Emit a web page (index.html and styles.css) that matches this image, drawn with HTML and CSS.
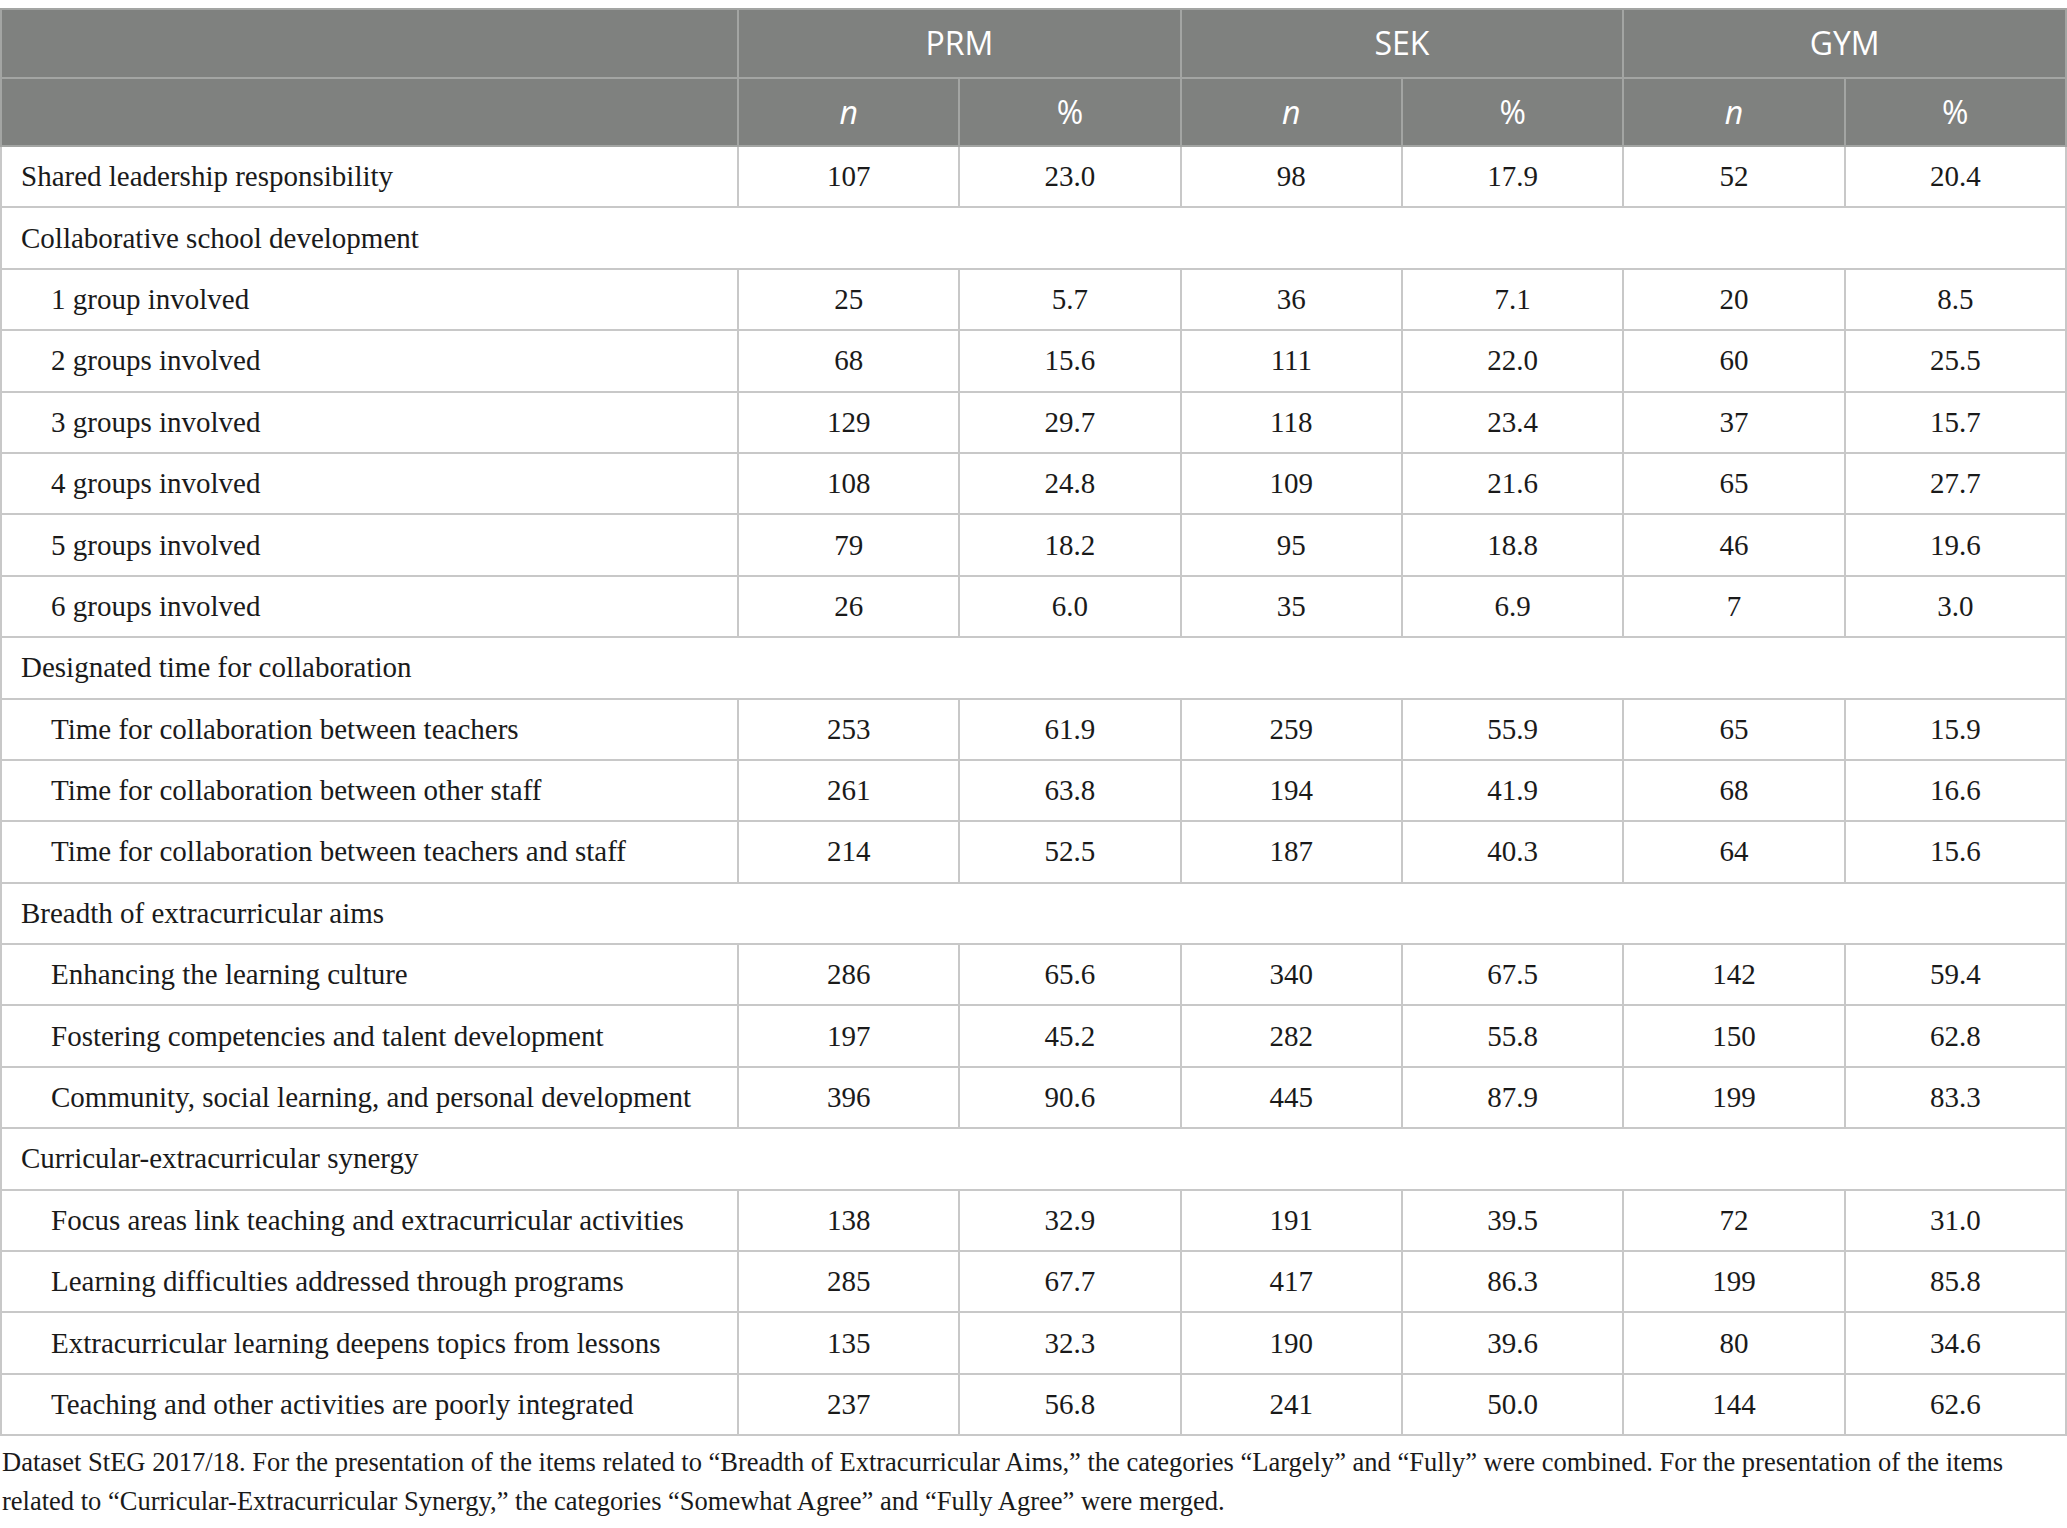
FILE: index.html
```html
<!DOCTYPE html>
<html lang="en">
<head>
<meta charset="utf-8"/>
<meta content="width=device-width, initial-scale=1.0" name="viewport"/>
<title>Table</title>
<link rel="stylesheet" href="styles.css">
</head>
<body>
<div class="wrap">
<table class="data">
<colgroup>
<col class="c-label">
<col><col><col><col><col><col>
</colgroup>
<thead>
<tr>
<th></th>
<th colspan="2">PRM</th>
<th colspan="2">SEK</th>
<th colspan="2">GYM</th>
</tr>
<tr>
<th></th>
<th><i>n</i></th><th>%</th>
<th><i>n</i></th><th>%</th>
<th><i>n</i></th><th>%</th>
</tr>
</thead>
<tbody>
<tr><td>Shared leadership responsibility</td><td>107</td><td>23.0</td><td>98</td><td>17.9</td><td>52</td><td>20.4</td></tr>
<tr class="section"><td colspan="7">Collaborative school development</td></tr>
<tr class="sub"><td>1 group involved</td><td>25</td><td>5.7</td><td>36</td><td>7.1</td><td>20</td><td>8.5</td></tr>
<tr class="sub"><td>2 groups involved</td><td>68</td><td>15.6</td><td>111</td><td>22.0</td><td>60</td><td>25.5</td></tr>
<tr class="sub"><td>3 groups involved</td><td>129</td><td>29.7</td><td>118</td><td>23.4</td><td>37</td><td>15.7</td></tr>
<tr class="sub"><td>4 groups involved</td><td>108</td><td>24.8</td><td>109</td><td>21.6</td><td>65</td><td>27.7</td></tr>
<tr class="sub"><td>5 groups involved</td><td>79</td><td>18.2</td><td>95</td><td>18.8</td><td>46</td><td>19.6</td></tr>
<tr class="sub"><td>6 groups involved</td><td>26</td><td>6.0</td><td>35</td><td>6.9</td><td>7</td><td>3.0</td></tr>
<tr class="section"><td colspan="7">Designated time for collaboration</td></tr>
<tr class="sub"><td>Time for collaboration between teachers</td><td>253</td><td>61.9</td><td>259</td><td>55.9</td><td>65</td><td>15.9</td></tr>
<tr class="sub"><td>Time for collaboration between other staff</td><td>261</td><td>63.8</td><td>194</td><td>41.9</td><td>68</td><td>16.6</td></tr>
<tr class="sub"><td>Time for collaboration between teachers and staff</td><td>214</td><td>52.5</td><td>187</td><td>40.3</td><td>64</td><td>15.6</td></tr>
<tr class="section"><td colspan="7">Breadth of extracurricular aims</td></tr>
<tr class="sub"><td>Enhancing the learning culture</td><td>286</td><td>65.6</td><td>340</td><td>67.5</td><td>142</td><td>59.4</td></tr>
<tr class="sub"><td>Fostering competencies and talent development</td><td>197</td><td>45.2</td><td>282</td><td>55.8</td><td>150</td><td>62.8</td></tr>
<tr class="sub"><td>Community, social learning, and personal development</td><td>396</td><td>90.6</td><td>445</td><td>87.9</td><td>199</td><td>83.3</td></tr>
<tr class="section"><td colspan="7">Curricular-extracurricular synergy</td></tr>
<tr class="sub"><td>Focus areas link teaching and extracurricular activities</td><td>138</td><td>32.9</td><td>191</td><td>39.5</td><td>72</td><td>31.0</td></tr>
<tr class="sub"><td>Learning difficulties addressed through programs</td><td>285</td><td>67.7</td><td>417</td><td>86.3</td><td>199</td><td>85.8</td></tr>
<tr class="sub"><td>Extracurricular learning deepens topics from lessons</td><td>135</td><td>32.3</td><td>190</td><td>39.6</td><td>80</td><td>34.6</td></tr>
<tr class="sub"><td>Teaching and other activities are poorly integrated</td><td>237</td><td>56.8</td><td>241</td><td>50.0</td><td>144</td><td>62.6</td></tr>
</tbody>
</table>
<p class="note">Dataset StEG 2017/18. For the presentation of the items related to “Breadth of Extracurricular Aims,” the categories “Largely” and “Fully” were combined. For the presentation of the items related to “Curricular-Extracurricular Synergy,” the categories “Somewhat Agree” and “Fully Agree” were merged.</p>
</div>
</body>
</html>
```

FILE: styles.css
```css
body {
  margin: 0;
  background: #fff;
  font-family: "Liberation Serif", "Times New Roman", serif;
  color: #1a1a1a;
}
.wrap {
  padding-top: 8px;
}
.data {
  width: 100%;
  border-collapse: collapse;
  table-layout: fixed;
}
.c-label { width: 737px; }
.data th {
  background: #7f817f;
  color: #fff;
  font-family: "Open Sans", "Noto Sans", sans-serif;
  font-weight: normal;
  font-size: 32px;
  line-height: 1;
  height: 66.5px;
  padding: 0;
  border: 2px solid #a3a5a3;
  text-align: center;
}
.data th i { font-style: italic; }
.data td {
  height: 59.4px;
  padding: 0;
  font-size: 29px;
  line-height: 1;
  text-align: center;
  border: 2px solid #c8c8c8;
}
.data td:first-child {
  text-align: left;
  padding-left: 19px;
}
.data tr.sub td:first-child { padding-left: 49px; }
.note {
  margin: 7px 0 0;
  padding-left: 2px;
  font-size: 26.5px;
  line-height: 39px;
}
```
